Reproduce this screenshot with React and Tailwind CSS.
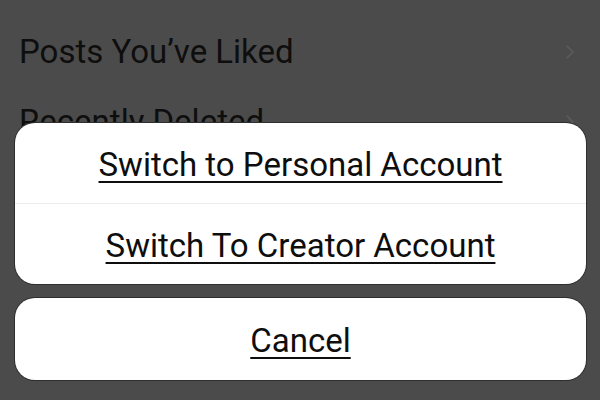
import { ChevronRight } from 'lucide-react'

const rows = ['Posts You’ve Liked', 'Recently Deleted']

export default function App() {
  return (
    <div
      className="relative w-[600px] h-[400px] overflow-hidden bg-[#4b4b4b]"
      style={{ fontFamily: 'Roboto, "Liberation Sans", sans-serif' }}
    >
      <div className="pt-[17px]">
        {rows.map((r) => (
          <div key={r} className="flex items-center justify-between h-[70px] pl-[19px] pr-[18px]">
            <span className="text-[33px] text-[#0e0e0e]">{r}</span>
            <ChevronRight className="w-[24px] h-[24px] text-[#5c5c5c]" strokeWidth={1.5} />
          </div>
        ))}
      </div>

      <div className="absolute left-[15px] right-[14px] bottom-[20px] flex flex-col gap-[14px]">
        <div className="bg-white rounded-[20px] overflow-hidden shadow-[0_0_0_1px_#2e2e2e]">
          <button className="w-full h-[80px] pt-[3px] flex items-center justify-center text-[33px] text-[#0e0e0e] underline underline-offset-[5px] decoration-2">
            Switch to Personal Account
          </button>
          <div className="h-px bg-[#ececec]" />
          <button className="w-full h-[80px] pt-[3px] flex items-center justify-center text-[33px] text-[#0e0e0e] underline underline-offset-[5px] decoration-2">
            Switch To Creator Account
          </button>
        </div>
        <button className="bg-white rounded-[20px] h-[82px] pt-[3px] flex items-center justify-center text-[33px] text-[#0e0e0e] underline underline-offset-[5px] decoration-2 shadow-[0_0_0_1px_#2e2e2e]">
          Cancel
        </button>
      </div>
    </div>
  )
}
